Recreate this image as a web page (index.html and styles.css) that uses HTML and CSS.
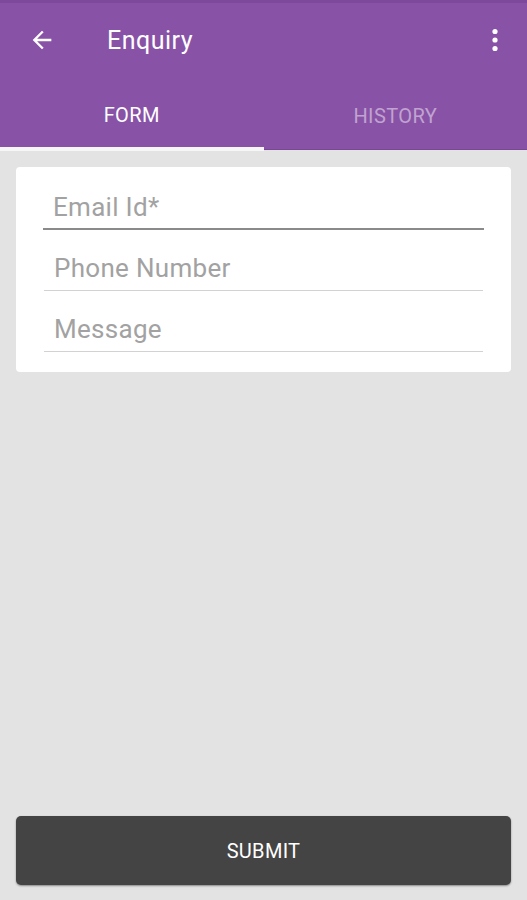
FILE: index.html
```html
<!DOCTYPE html>
<html lang="en">
<head>
    <meta charset="UTF-8">
    <meta name="viewport" content="width=device-width, initial-scale=1.0">
    <title>Enquiry</title>
    <link rel="stylesheet" href="styles.css">
</head>
<body>

<div class="app">
    <header class="appbar">
        <div class="toolbar">
            <button class="icon-btn back" aria-label="Back">
                <svg width="24" height="24" viewBox="0 0 24 24"><path d="M20 11H7.83l5.59-5.59L12 4l-8 8 8 8 1.41-1.41L7.83 13H20v-2z" fill="#fff"/></svg>
            </button>
            <h1 class="title">Enquiry</h1>
            <button class="icon-btn menu" aria-label="More">
                <svg width="24" height="24" viewBox="0 0 24 24"><circle cx="12" cy="3.5" r="2.6" fill="#fff"/><circle cx="12" cy="12" r="2.6" fill="#fff"/><circle cx="12" cy="20.5" r="2.6" fill="#fff"/></svg>
            </button>
        </div>
        <nav class="tabs">
            <div class="tab active">FORM</div>
            <div class="tab">HISTORY</div>
        </nav>
    </header>

    <main class="content">
        <!-- Enquiry form -->
        <div class="card">
            <div class="field focused">
                <input type="email" placeholder="Email Id*">
            </div>
            <div class="field">
                <input type="tel" placeholder="Phone Number">
            </div>
            <div class="field">
                <input type="text" placeholder="Message">
            </div>
        </div>
    </main>

    <div class="footer">
        <button class="submit">SUBMIT</button>
    </div>
</div>

</body>
</html>
```

FILE: styles.css
```css
html, body {
    margin: 0;
    padding: 0;
    height: 100%;
}
body {
    font-family: Roboto, "Noto Sans", Arial, sans-serif;
    background-color: #e3e3e3;
}
.app {
    display: flex;
    flex-direction: column;
    height: 100vh;
}
.appbar {
    background-color: #8852a6;
    border-top: 3px solid #7d4a9b;
}
.toolbar {
    display: flex;
    align-items: center;
    height: 74px;
    padding: 0 20px 0 28px;
}
.icon-btn {
    background: none;
    border: none;
    padding: 0;
    width: 24px;
    height: 24px;
    cursor: pointer;
}
.back {
    width: 28px;
    height: 28px;
}
.back svg {
    width: 28px;
    height: 28px;
}
.title {
    flex: 1;
    margin: 0 0 0 51px;
    color: #fff;
    font-size: 25px;
    font-weight: 400;
    letter-spacing: 0.5px;
}
.tabs {
    display: flex;
    height: 73px;
}
.tab {
    flex: 1;
    display: flex;
    align-items: center;
    justify-content: center;
    padding-top: 5px;
    font-size: 20px;
    font-weight: 400;
    letter-spacing: 0.4px;
    color: #c0a3d0;
    border-bottom: 1px solid #7a4796;
}
.tab.active {
    color: #fff;
    border-bottom: 4px solid #f6f6f6;
    height: 65px;
}
.content {
    flex: 1;
    padding: 17px 16px 0;
}
.card {
    background: #fff;
    border-radius: 4px;
    padding: 20px 28px 20px 28px;
}
.field {
    margin-bottom: 18px;
}
.field:last-child {
    margin-bottom: 0;
}
.field input {
    display: block;
    width: 100%;
    box-sizing: border-box;
    border: none;
    border-bottom: 1px solid #d2d2d2;
    padding: 5px 10px 7px;
    font-family: inherit;
    font-size: 26px;
    letter-spacing: 0.3px;
    color: #333;
    outline: none;
    background: transparent;
}
.field input::placeholder {
    color: #a2a2a2;
}
.field.focused input {
    border-bottom: 2px solid #8a8a8a;
    padding-bottom: 6px;
    margin-left: -1px;
    width: calc(100% + 2px);
}
.footer {
    padding: 0 16px 15px;
}
.submit {
    display: block;
    width: 100%;
    height: 69px;
    background-color: #444;
    color: #fff;
    border: none;
    border-radius: 5px;
    box-shadow: 0 1px 2px rgba(0, 0, 0, 0.4);
    font-family: inherit;
    font-size: 20px;
    font-weight: 400;
    letter-spacing: 0.3px;
    cursor: pointer;
}
```
